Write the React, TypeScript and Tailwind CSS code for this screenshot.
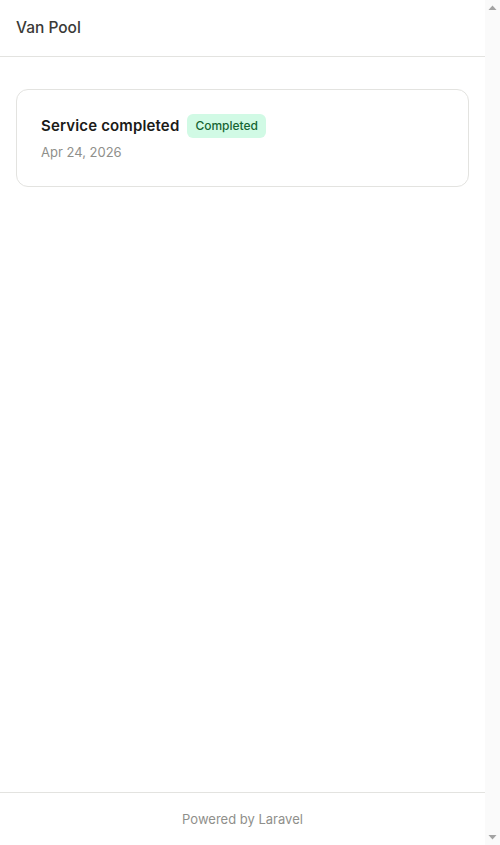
import React from "react";

function Scrollbar() {
  return (
    <div className="w-[15px] shrink-0 h-screen bg-[#fafafa] flex flex-col justify-between items-center">
      <svg width="15" height="15" viewBox="0 0 15 15">
        <polygon points="3.5,10 11.5,10 7.5,5.5" fill="#a3a3a3" />
      </svg>
      <svg width="15" height="15" viewBox="0 0 15 15">
        <polygon points="3.5,5 11.5,5 7.5,9.5" fill="#a3a3a3" />
      </svg>
    </div>
  );
}

export default function App() {
  return (
    <div className="h-screen flex bg-white" style={{ fontFamily: "Inter, 'Noto Sans', sans-serif" }}>
      <div className="flex-1 min-w-0 flex flex-col">
        <header className="h-[57px] shrink-0 border-b border-[#e3e3e0] px-4 flex items-center">
          <span className="text-[15.5px] font-medium text-[#3a3a37]">Van Pool</span>
        </header>
        <main className="flex-1 px-4 py-8">
          <div className="rounded-xl border border-[#e3e3e0] px-6 py-6">
            <div className="flex items-center gap-2">
              <span className="text-[15px] font-semibold text-[#1b1b18] tracking-[0.01em]">Service completed</span>
              <span className="h-6 px-2 rounded-md bg-[#d1fae5] text-[#166534] text-xs font-medium flex items-center">
                Completed
              </span>
            </div>
            <div className="mt-1 text-[13px] leading-5 text-[#8f8f8b]">Apr 24, 2026</div>
          </div>
        </main>
        <footer className="shrink-0 border-t border-[#e3e3e0] py-4 text-center text-[13px] leading-5 text-[#8f8f8b]">
          Powered by Laravel
        </footer>
      </div>
      <Scrollbar />
    </div>
  );
}
